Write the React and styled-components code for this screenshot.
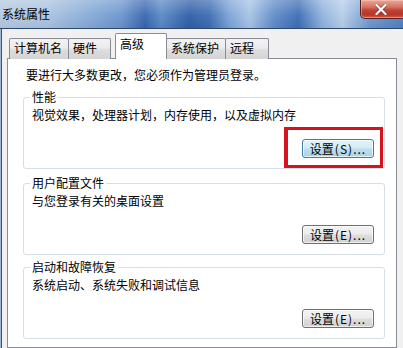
import React from "react";
import styled, { createGlobalStyle } from "styled-components";

const Global = createGlobalStyle`
  html, body { margin: 0; padding: 0; background: #f0f0f0; }
  body { font-family: "Noto Sans CJK SC", "Noto Sans", sans-serif; font-size: 12px; color: #000; }
`;

const FONT = `"Noto Sans CJK SC", "Noto Sans", sans-serif`;

const Window = styled.div`
  width: 403px;
  height: 348px;
  overflow: hidden;
  display: flex;
  flex-direction: column;
  background: #f0f0f0;
`;

const TitleBar = styled.div`
  height: 28px;
  flex: none;
  display: flex;
  justify-content: space-between;
  align-items: flex-start;
  border-bottom: 1px solid #2c4669;
  background:
    linear-gradient(180deg, rgba(255,255,255,0.28), rgba(255,255,255,0.05) 55%, rgba(0,0,0,0.04)),
    linear-gradient(90deg, #b3c9e2 0%, #a9c2df 12%, #86aad6 22%, #6b95cd 30%, #3766ae 36%, #5a88c6 40%, #2f5ea7 47%, #3e6cb2 52%, #7ca4d6 57%, #a6c3e4 62%, #5f8cc8 68%, #3c6db4 74%, #8fb2dd 80%, #b5cde8 85%, #6c97cf 92%, #4f80c2 100%);
`;

const Title = styled.div`
  padding: 6px 0 0 2px;
  font: 12px/16px ${FONT};
  color: #000;
`;

const CloseButton = styled.div`
  width: 46px;
  height: 19px;
  margin-right: -3px;
  box-sizing: border-box;
  border: 1px solid #5a1f1c;
  border-top: none;
  border-radius: 0 0 5px 5px;
  background: linear-gradient(180deg, #e9a899 0%, #d6705f 40%, #c0453a 55%, #b8342a 80%, #cf5a45 100%);
  box-shadow: inset 0 0 0 1px rgba(255, 210, 200, 0.45);
  display: flex;
  align-items: center;
  justify-content: center;
  svg { margin-left: -4px; }
`;

const Body = styled.div`
  flex: 1;
  display: flex;
  flex-direction: column;
  border-left: 1px solid #9fb6d2;
  box-shadow: inset 1px 0 0 #3e5473;
  padding: 4px 0 0 6px;
`;

const TabStrip = styled.div`
  display: flex;
  align-items: flex-end;
  height: 26px;
  padding-left: 2px;
`;

const Tab = styled.div`
  position: relative;
  box-sizing: border-box;
  width: ${(p) => p.$w}px;
  margin-left: ${(p) => p.$ml || 0}px;
  height: ${(p) => (p.$active ? 26 : 21)}px;
  padding: ${(p) => (p.$active ? "2px 0 0 4px" : "1px 0 0 4px")};
  border: 1px solid #898c95;
  border-bottom: none;
  border-radius: 2px 2px 0 0;
  font: 12px/16px ${FONT};
  color: #000;
  white-space: nowrap;
  z-index: ${(p) => (p.$active ? 2 : 1)};
  background: ${(p) =>
    p.$active
      ? "#ffffff"
      : "linear-gradient(180deg, #f3f3f3 0%, #ebebeb 45%, #dddddd 55%, #d4d4d4 100%)"};
`;

const Panel = styled.div`
  flex: 1;
  width: 390px;
  box-sizing: border-box;
  margin-top: -1px;
  border: 1px solid #898c95;
  background: #ffffff;
  padding-top: 8px;
  display: flex;
  flex-direction: column;
`;

const Intro = styled.div`
  padding-left: 18px;
  font: 12px/16px ${FONT};
`;

const Group = styled.section`
  margin: ${(p) => p.$mt}px 11px 0 15px;
  height: 72px;
  box-sizing: border-box;
  border: 1px solid #d5dfe5;
  border-radius: 3px;
  padding-left: 8px;
  display: flex;
  flex-direction: column;
`;

const Legend = styled.div`
  align-self: flex-start;
  margin: -9px 0 0 -2px;
  padding: 0 2px;
  background: #ffffff;
  font: 12px/16px ${FONT};
`;

const Desc = styled.div`
  margin-top: 2px;
  font: 12px/16px ${FONT};
`;

const ButtonSlot = styled.div`
  position: relative;
  margin: auto 10px 10px 0;
  align-self: flex-end;
  display: flex;
`;

const Button = styled.button`
  width: 72px;
  height: 19px;
  box-sizing: border-box;
  padding: 0;
  font: 12px/16px ${FONT};
  color: #000;
  border: 1px solid ${(p) => (p.$focused ? "#3c7fb1" : "#707070")};
  border-radius: 3px;
  background: ${(p) =>
    p.$focused
      ? "linear-gradient(180deg, #e3f2f9 0%, #d3ebf5 48%, #bcdfee 52%, #a9d3e6 100%)"
      : "linear-gradient(180deg, #f3f3f3 0%, #ececec 48%, #dedede 52%, #d0d0d0 100%)"};
  box-shadow: inset 0 0 0 1px rgba(255, 255, 255, 0.65);
  display: flex;
  align-items: center;
  justify-content: center;
`;

const Mnemonic = styled.span`
  letter-spacing: 1px;
  margin-left: 1px;
`;

const Highlight = styled.div`
  position: absolute;
  top: -12px;
  bottom: -10px;
  left: -18px;
  right: -9px;
  border: 3px solid #d3141c;
  border-left-width: 4px;
  pointer-events: none;
`;

const tabs = [
  { label: "计算机名", w: 60, ml: 0 },
  { label: "硬件", w: 43, ml: -1 },
  { label: "高级", w: 52, ml: 4, active: true },
  { label: "系统保护", w: 60, ml: -1 },
  { label: "远程", w: 44, ml: -1 },
];

const groups = [
  { title: "性能", desc: "视觉效果，处理器计划，内存使用，以及虚拟内存", key: "S", mt: 14, focused: true },
  { title: "用户配置文件", desc: "与您登录有关的桌面设置", key: "E", mt: 14 },
  { title: "启动和故障恢复", desc: "系统启动、系统失败和调试信息", key: "E", mt: 12 },
];

export default function App() {
  return (
    <>
      <Global />
      <Window>
        <TitleBar>
          <Title>系统属性</Title>
          <CloseButton>
            <svg width="12" height="11" viewBox="0 0 12 11">
              <path d="M1.5 1 L10.5 10 M10.5 1 L1.5 10" stroke="#4a1410" strokeWidth="3.4" strokeLinecap="square" opacity="0.55" />
              <path d="M1.5 1 L10.5 10 M10.5 1 L1.5 10" stroke="#ffffff" strokeWidth="2.2" strokeLinecap="square" />
            </svg>
          </CloseButton>
        </TitleBar>
        <Body>
          <TabStrip>
            {tabs.map((t) => (
              <Tab key={t.label} $w={t.w} $ml={t.ml} $active={t.active}>
                {t.label}
              </Tab>
            ))}
          </TabStrip>
          <Panel>
            <Intro>要进行大多数更改，您必须作为管理员登录。</Intro>
            {groups.map((g) => (
              <Group key={g.title} $mt={g.mt}>
                <Legend>{g.title}</Legend>
                <Desc>{g.desc}</Desc>
                <ButtonSlot>
                  <Button $focused={g.focused}>
                    设置<Mnemonic>({g.key})...</Mnemonic>
                  </Button>
                  {g.focused && <Highlight />}
                </ButtonSlot>
              </Group>
            ))}
          </Panel>
        </Body>
      </Window>
    </>
  );
}
